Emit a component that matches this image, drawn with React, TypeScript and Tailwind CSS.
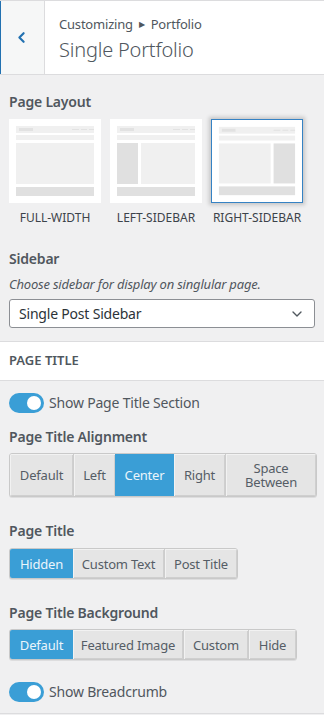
import { ChevronDown, ChevronLeft } from "lucide-react";

type LayoutKind = "full" | "left" | "right";

function LayoutThumb({ kind, selected }: { kind: LayoutKind; selected?: boolean }) {
  return (
    <div
      className={`h-[84px] w-[92px] bg-white ${
        selected ? "border border-[#3582c4] shadow-[0_0_4px_2px_rgba(0,0,0,0.18)]" : ""
      }`}
    >
      <svg viewBox="0 0 92 84" className="h-full w-full">
        {/* header bar */}
        <rect x="7" y="7" width="78" height="7" fill="#f0f0f0" />
        <rect x="10" y="9" width="14" height="3" fill="#e2e2e2" />
        <rect x="63" y="10" width="7" height="1" fill="#e2e2e2" />
        <rect x="72" y="10" width="6" height="1" fill="#e2e2e2" />
        <rect x="80" y="10" width="5" height="1" fill="#e2e2e2" />
        {/* nav */}
        <rect x="7" y="16" width="78" height="5" fill="#f0f0f0" />
        {/* body */}
        {kind === "full" && <rect x="7" y="24" width="78" height="41" fill="#f0f0f0" />}
        {kind === "left" && (
          <>
            <rect x="7" y="24" width="21" height="41" fill="#e0e0e0" />
            <rect x="31" y="24" width="54" height="41" fill="#f0f0f0" />
          </>
        )}
        {kind === "right" && (
          <>
            <rect x="7" y="24" width="53" height="41" fill="#f0f0f0" />
            <rect x="63" y="24" width="22" height="41" fill="#e0e0e0" />
          </>
        )}
        {/* footer */}
        <rect x="7" y="68" width="78" height="9" fill="#e0e0e0" />
      </svg>
    </div>
  );
}

function Toggle({ label }: { label: string }) {
  return (
    <div className="flex items-center gap-[5px]">
      <div className="flex h-[20px] w-[35px] items-center justify-end rounded-full bg-[#3a9ed6] pr-[3px]">
        <div className="h-[14px] w-[14px] rounded-full bg-white" />
      </div>
      <span className="text-[14px] leading-[20px] tracking-[-0.2px] text-[#50575e]">{label}</span>
    </div>
  );
}

function ButtonGroup({
  items,
  active,
  height,
}: {
  items: { label: string; width: number }[];
  active: number;
  height: string;
}) {
  return (
    <div
      className={`flex ${height} w-fit overflow-hidden rounded-[3px] border border-[#c9c9c9] bg-[#e5e5e5] shadow-[0_1px_0_rgba(0,0,0,0.08)]`}
    >
      {items.map((item, i) => (
        <div
          key={item.label}
          style={{ width: item.width }}
          className={`flex items-center justify-center px-1 text-center text-[13px] leading-[14px] tracking-[-0.2px] ${
            i === active
              ? "bg-[#3a9ed6] text-[#eaf5fb]"
              : "border-l border-[#cdcdcd] text-[#555d66] shadow-[inset_1px_1px_0_#f2f2f2,inset_-1px_-1px_0_#cfcfcf]"
          } ${i === active + 1 ? "border-l-0" : ""} ${i === 0 ? "border-l-0" : ""}`}
        >
          {item.label}
        </div>
      ))}
    </div>
  );
}

function Label({ children, className = "" }: { children: React.ReactNode; className?: string }) {
  return (
    <div className={`text-[14px] font-semibold leading-[20px] tracking-[-0.2px] text-[#50575e] ${className}`}>
      {children}
    </div>
  );
}

export default function App() {
  return (
    <div
      className="h-[715px] w-[324px] overflow-hidden bg-[#f0f0f1]"
      style={{ fontFamily: '"Noto Sans", "Open Sans", sans-serif' }}
    >
      {/* header */}
      <div className="flex h-[75px] border-y border-[#dcdcde] bg-white">
        <div className="flex w-[45px] items-center justify-center border-r border-l border-r-[#dcdcde] border-l-[#2271b1] bg-[#f6f7f7] pr-[2px]">
          <ChevronLeft className="h-[17px] w-[17px] text-[#2271b1]" strokeWidth={3} />
        </div>
        <div className="flex flex-col pl-[14px] pt-[13px]">
          <div className="flex items-center text-[13px] leading-[20px] tracking-[-0.2px] text-[#50575e]">
            Customizing
            <span className="mx-[6px] text-[8px]">▶</span>
            Portfolio
          </div>
          <div className="mt-[4px] text-[20px] font-light leading-[24px] tracking-[-0.2px] text-[#50575e]">
            Single Portfolio
          </div>
        </div>
      </div>

      <div className="px-[9px]">
        <Label className="mt-[17px]">Page Layout</Label>
        <div className="mt-[7px] flex gap-[9px]">
          {[
            { kind: "full" as const, label: "FULL-WIDTH" },
            { kind: "left" as const, label: "LEFT-SIDEBAR" },
            { kind: "right" as const, label: "RIGHT-SIDEBAR" },
          ].map((l) => (
            <div key={l.kind} className="flex w-[92px] flex-col items-center">
              <LayoutThumb kind={l.kind} selected={l.kind === "right"} />
              <div className="mt-[7px] text-[12px] leading-[16px] text-[#3c434a]">{l.label}</div>
            </div>
          ))}
        </div>

        <Label className="mt-[23px]">Sidebar</Label>
        <div className="mt-[6px] text-[13px] italic leading-[18px] tracking-[-0.2px] text-[#50575e]">
          Choose sidebar for display on singlular page.
        </div>
        <div className="mt-[6px] flex h-[29px] w-[306px] items-center justify-between rounded-[3px] border border-[#8c8f94] bg-white pl-[9px] pr-[9px]">
          <span className="text-[14px] tracking-[-0.2px] text-[#2c3338]">Single Post Sidebar</span>
          <ChevronDown className="h-[16px] w-[16px] text-[#50575e]" strokeWidth={2} />
        </div>
      </div>

      {/* section */}
      <div className="mt-[13px] flex h-[40px] items-center border-y border-[#dcdcde] bg-white px-[9px]">
        <span className="text-[13px] font-semibold text-[#50575e]">PAGE TITLE</span>
      </div>

      <div className="px-[9px]">
        <div className="mt-[12px]">
          <Toggle label="Show Page Title Section" />
        </div>

        <Label className="mt-[14px]">Page Title Alignment</Label>
        <div className="mt-[6px]">
          <ButtonGroup
            height="h-[44px]"
            active={2}
            items={[
              { label: "Default", width: 63 },
              { label: "Left", width: 42 },
              { label: "Center", width: 59 },
              { label: "Right", width: 51 },
              { label: "Space Between", width: 91 },
            ]}
          />
        </div>

        <Label className="mt-[24px]">Page Title</Label>
        <div className="mt-[7px]">
          <ButtonGroup
            height="h-[31px]"
            active={0}
            items={[
              { label: "Hidden", width: 63 },
              { label: "Custom Text", width: 91 },
              { label: "Post Title", width: 73 },
            ]}
          />
        </div>

        <Label className="mt-[24px]">Page Title Background</Label>
        <div className="mt-[6px]">
          <ButtonGroup
            height="h-[31px]"
            active={0}
            items={[
              { label: "Default", width: 63 },
              { label: "Featured Image", width: 110 },
              { label: "Custom", width: 65 },
              { label: "Hide", width: 48 },
            ]}
          />
        </div>

        <div className="mt-[22px]">
          <Toggle label="Show Breadcrumb" />
        </div>
      </div>
      <div className="mt-[11px] border-t border-[#dcdcde]" />
    </div>
  );
}
